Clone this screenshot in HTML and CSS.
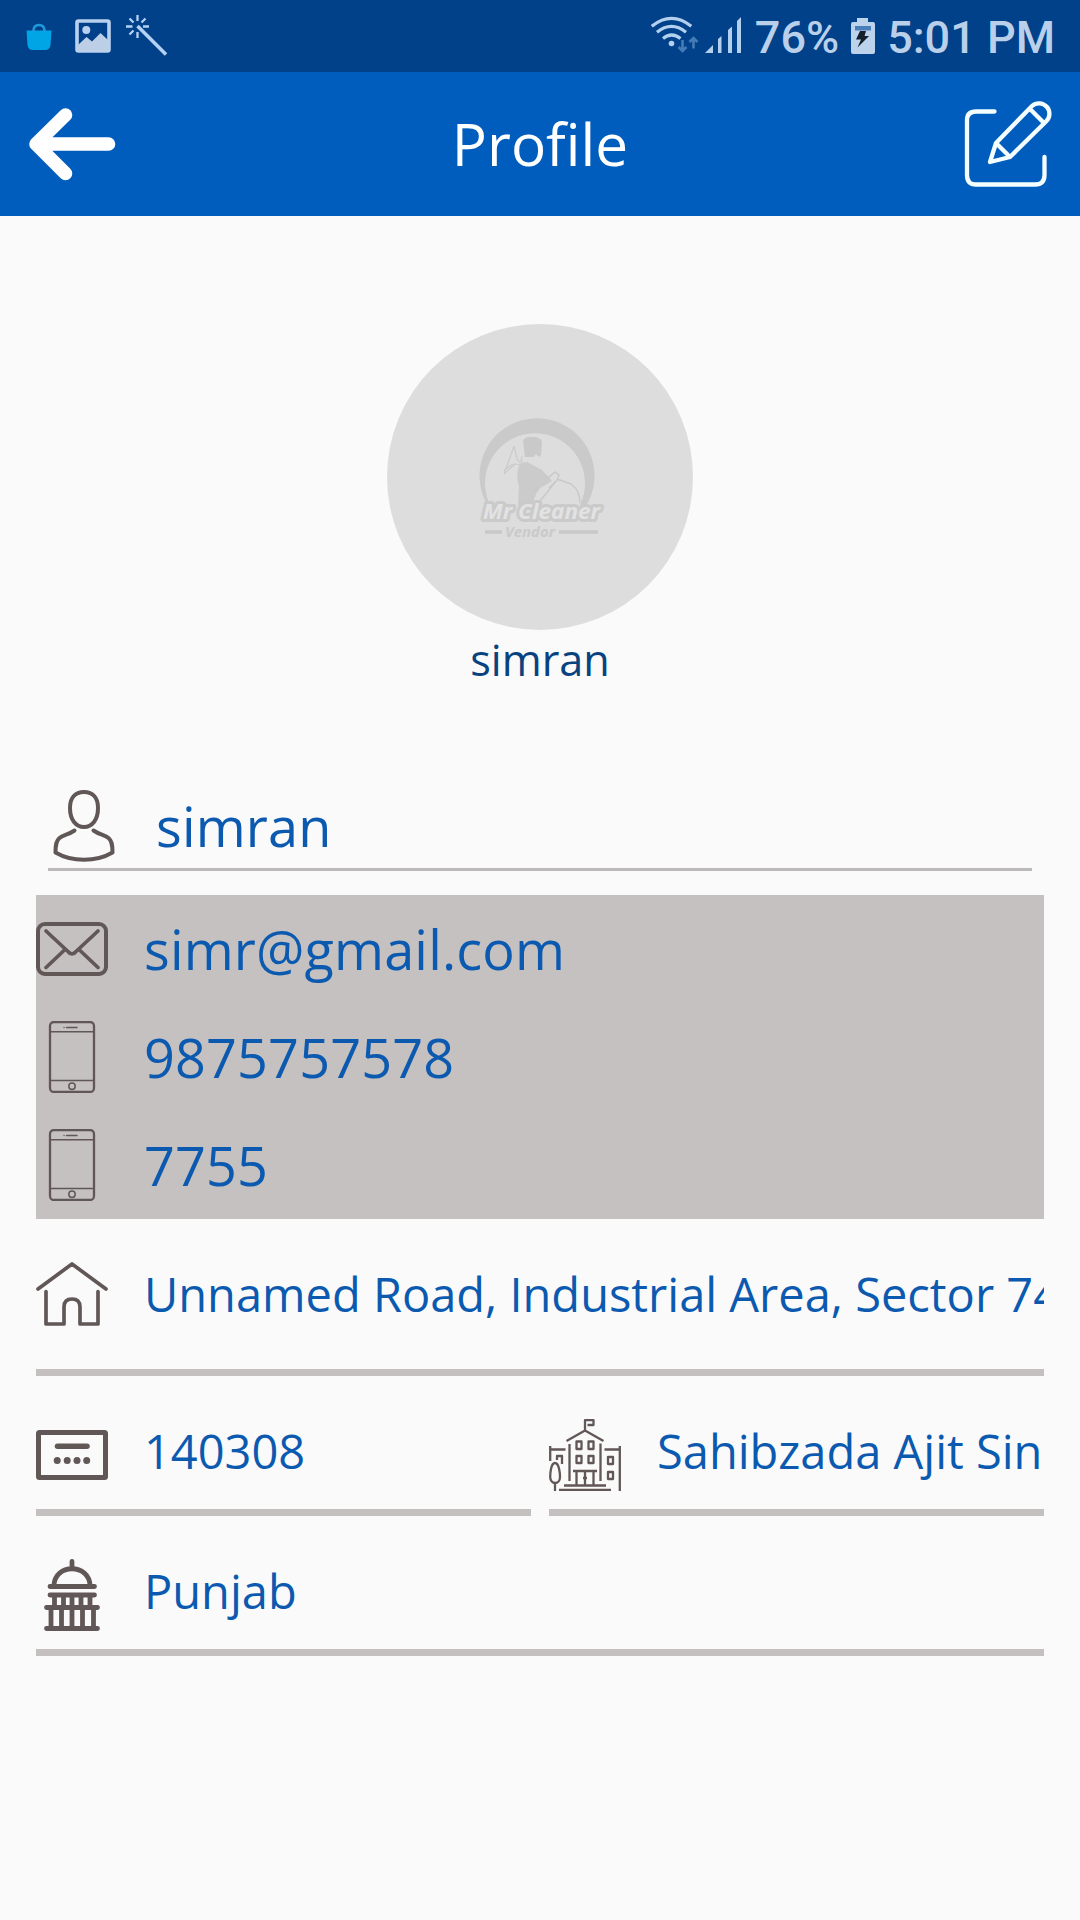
FILE: index.html
```html
<!DOCTYPE html>
<html lang="en">
<head>
<meta charset="utf-8">
<title>Profile</title>
<link rel="stylesheet" href="styles.css">
</head>
<body>
<div class="status-bar">
  <div class="notifications">
    <svg width="26" height="72" viewBox="26 0 26 72">
      <path d="M26.500 30.500H51.500L50.500 45Q50 50 45 50H33Q28 50 27.500 45Z" fill="#00a5e6"/>
      <path d="M33.500 32V30Q34 25 39 25Q44 25 44.500 30V32" fill="none" stroke="#1d9bdc" stroke-width="2.500"/>
    </svg>
    <svg width="36" height="72" viewBox="75 0 36 72">
      <rect x="77" y="21" width="32" height="30" rx="1.500" fill="none" stroke="#b9d0ee" stroke-width="3.600"/>
      <circle cx="86.300" cy="30" r="4" fill="#b9d0ee"/>
      <path d="M78 45L86.500 37L92 41.500L100.500 33L108 40V51H78Z" fill="#bccfe6"/>
    </svg>
    <svg width="42" height="72" viewBox="126 0 42 72">
      <g fill="none" stroke="#b4d2f4" stroke-width="2.300">
        <path d="M137.500 15V21M137.500 32V38M126 26.500H132.500M143 26.500H149M129.500 18.500L133.500 22.500M145.500 18.500L141.500 22.500M129.500 34.500L133.500 30.500"/>
        <path d="M137.500 26L166 54.500" stroke-width="3.600"/>
      </g>
    </svg>
  </div>
  <div class="system">
    <svg class="wifi" width="49" height="72" viewBox="650 0 49 72">
      <g fill="none" stroke="#b4d0ef" stroke-width="3.200">
        <path d="M650.800 26.200Q670.500 10.500 690.300 26.200M656 32.300Q670.500 20.500 685 32.300M662 38.500Q670.500 31.500 679.500 38.500"/>
      </g>
      <circle cx="670.500" cy="43.500" r="2.800" fill="#b4d0ef"/>
      <path d="M681.500 40V51M677.500 47L681.500 51L685.500 47M692.500 48.500V38M688.500 42L692.500 38L696.500 42" fill="none" stroke="#457cb7" stroke-width="2.600"/>
    </svg>
    <svg class="signal" width="37" height="72" viewBox="704 0 37 72">
      <path d="M704 53L712 45V53ZM717 53V39L720.500 36V53ZM727 53V30L731 26.500V53ZM736 53V21L740 17V53Z" fill="#b4d0ef"/>
    </svg>
    <span class="battery-level">76%</span>
    <svg class="battery" width="24" height="72" viewBox="851 0 24 72">
      <path d="M857 22V18H868V22H873Q875 22 875 24V52Q875 54 873 54H853Q851 54 851 52V24Q851 22 853 22Z" fill="#bdd3ec"/>
      <path d="M855 26H871V30.500H855Z" fill="#4a7eb9"/>
      <path d="M860 31H866L864.500 36H869L857.500 47.500L861 39.500H856Z" fill="#14202c"/>
    </svg>
    <span class="clock">5:01 PM</span>
  </div>
</div>

<header class="app-bar">
  <svg class="back" width="88" height="88" viewBox="28 100 88 88">
    <path d="M65.500 115L36 144L65.500 173.500M36 144H108.500" fill="none" stroke="#fff" stroke-width="13.600" stroke-linecap="round" stroke-linejoin="round"/>
  </svg>
  <h1>Profile</h1>
  <svg class="edit" width="88" height="88" viewBox="964 100 88 88">
    <g fill="none" stroke="#f4feff" stroke-width="4.300" stroke-linecap="round" stroke-linejoin="round">
      <path d="M994.500 111.500H976Q967 111.500 967 120.500V175Q967 184.500 976 184.500H1035Q1044.500 184.500 1044.500 175V157"/>
      <path d="M990 162L996 143L1032 106A10.300 10.300 0 0 1 1046 121.500L1010 157ZM996 143L1010 157M1030 109L1043 122"/>
    </g>
  </svg>
</header>

<main>
  <section class="identity">
    <svg class="avatar" width="306" height="306" viewBox="387 324 306 306">
      <circle cx="540" cy="477" r="153" fill="#ddd"/>
      <path d="M487.500 505A57.500 57.500 0 1 1 586.500 505H580A50 50 0 1 0 490 505Z" fill="#cacaca"/>
      <path d="M523 441Q525 436 533 437Q541 437 542 442L541 455L539 457L536 454L533 457H525Z" fill="#c9c9c9"/>
      <path d="M520 464L527 462L542 470L552 481L540 488L536 494L532 505H518L519 487Q515 472 520 464Z" fill="#cbcbcb"/>
      <path d="M514 446L508 463L504 474L515 464L521 465M514 446L517 459L521 464M504 470L513 464M522 456L521 461L525 464" fill="none" stroke="#cbcbcb" stroke-width="1.200"/>
      <path d="M540 501L557 480M557 479L571 484Q580 490 580 503M543 474L548 478L555 472L559 475L557 480L549 488M538 486L534 492" fill="none" stroke="#c9c9c9" stroke-width="1.400"/>
      <text class="logo-name" x="483" y="519" textLength="117" lengthAdjust="spacingAndGlyphs">Mr Cleaner</text>
      <text class="logo-role" x="505" y="537" textLength="50" lengthAdjust="spacingAndGlyphs">Vendor</text>
      <path d="M485 532H502M559 532H598" stroke="#c8c8c8" stroke-width="3.500"/>
    </svg>
    <p class="display-name">simran</p>
  </section>

  <div class="field name-field">
    <svg class="icon" viewBox="0 0 72 72">
      <g stroke-width="4">
        <path d="M36 2C45 2 50 8 50 18C50 30 44 37 36 37S22 30 22 18C22 8 27 2 36 2Z"/>
        <path d="M26.500 40.500C20 45 15 45 11.500 48C8 51 7.500 55 7.500 62.500C24 72.200 48 72.200 64.500 62.500C64.500 55 64 51 60.500 48C57 45 52 45 45.500 40.500"/>
      </g>
    </svg>
    <span>simran</span>
  </div>

  <section class="contact">
    <div class="field">
      <svg class="icon" viewBox="0 0 72 72">
        <g stroke-width="4">
          <rect x="2" y="11" width="68" height="50" rx="7"/>
          <path d="M10 18L32 38.500Q36 43.500 40 38.500L62 18M10 54.500L28.500 37M62 54.500L43.500 37" stroke-width="3.700"/>
        </g>
      </svg>
      <span>simr@gmail.com</span>
    </div>
    <div class="field">
      <svg class="icon" viewBox="0 0 72 72">
        <rect x="14" y="1" width="44" height="70" rx="4" stroke-width="2.300"/>
        <path d="M14 10.700H58M14 59.500H58M30.500 6.500H41" stroke-width="1.500"/>
        <path d="M28 6.500H28.100" stroke-width="1.300"/>
        <circle cx="36" cy="65.300" r="3.200" stroke-width="1.500"/>
      </svg>
      <span>9875757578</span>
    </div>
    <div class="field">
      <svg class="icon" viewBox="0 0 72 72">
        <rect x="14" y="1" width="44" height="70" rx="4" stroke-width="2.300"/>
        <path d="M14 10.700H58M14 59.500H58M30.500 6.500H41" stroke-width="1.500"/>
        <path d="M28 6.500H28.100" stroke-width="1.300"/>
        <circle cx="36" cy="65.300" r="3.200" stroke-width="1.500"/>
      </svg>
      <span>7755</span>
    </div>
  </section>

  <div class="field line-field street">
    <svg class="icon" viewBox="0 0 72 72">
      <path d="M2 31L36 6L70 31M10 33.500V66H28V49Q28 41 36 41T44 49V66H62V33.500" stroke-width="3.700"/>
    </svg>
    <span>Unnamed Road, Industrial Area, Sector 74</span>
  </div>

  <div class="pair">
    <div class="field line-field">
      <svg class="icon" viewBox="0 0 72 72">
        <rect x="2.500" y="13.500" width="67" height="45" rx="1" stroke-width="5"/>
        <path d="M21.500 27.300H51" stroke-width="5.500"/>
        <path d="M21.200 41.500H21.210M31.200 41.500H31.210M41 41.500H41.010M50.700 41.500H50.710" stroke-width="7"/>
      </svg>
      <span>140308</span>
    </div>
    <div class="field line-field">
      <svg class="icon" viewBox="0 0 72 72">
        <g stroke-width="2.300" stroke-linecap="butt">
          <path d="M36 12V1.200H44.500V6H38.500M17.500 22L36 11.500L54.500 22M20.500 25V62M51.500 24.500V62"/>
          <path d="M1.200 42V27M1 30.500H16.500M8 41V37H13V45M70.800 72V27M71 30.500H55.500"/>
          <path d="M27.500 22.500H32.500V30H27.500ZM39.500 22.500H44.500V30H39.500ZM27.500 37H32.500V44H27.500ZM39.500 37H44.500V44H39.500ZM59 38H64V45H59ZM59 53H64V60H59Z"/>
          <path d="M24 52H48M27.500 52V66M44.500 52V66M36 52V66M34 59H38M15 66.500H57M10 71H62"/>
          <path d="M6 44C10 44 11 54 11 58C11 66 1.200 66 1.200 58C1.200 54 2 44 6 44ZM6 64V72"/>
        </g>
      </svg>
      <span>Sahibzada Ajit Sin</span>
    </div>
  </div>

  <div class="field line-field region">
    <svg class="icon" viewBox="0 0 72 72">
      <g stroke-width="4.800">
        <path d="M36 2.500V9M18 27C18 4 54 4 54 27M14 27.500H58.500M14 36H58.500M10.500 48.500H61.500M10.500 69.500H61.500"/>
        <path d="M18.500 36V47M27.500 36V47M36 36V47M45 36V47M54 36V47M15 49V69M25.500 49V69M36 49V69M46.500 49V69M57.500 49V69" stroke-linecap="butt"/>
      </g>
    </svg>
    <span>Punjab</span>
  </div>
</main>
</body>
</html>
```
FILE: styles.css
```css
* {
  box-sizing: border-box;
}

body {
  margin: 0;
  min-height: 1920px;
  background: #fafafa;
  color: #0c5ab0;
  font-family: "Open Sans", "Noto Sans", sans-serif;
}

svg {
  display: block;
  flex: none;
}

.status-bar {
  height: 72px;
  padding: 0 25px 0 26px;
  display: flex;
  justify-content: space-between;
  background: #004189;
  color: #b9cfea;
  font: 500 45px/75px Roboto, sans-serif;
}

.notifications,
.system {
  display: flex;
}

.notifications {
  gap: 15px;
}

.notifications svg:first-child {
  margin-right: 8px;
}

.signal {
  margin: 0 13px 0 5px;
}

.battery {
  margin: 0 12px;
}

.app-bar {
  height: 144px;
  padding: 0 28px;
  display: flex;
  align-items: center;
  justify-content: space-between;
  background: #005dbd;
}

h1 {
  margin: 0 0 2px;
  color: #fff;
  font-size: 58.5px;
  font-weight: 400;
}

main {
  padding: 108px 36px 0;
}

.identity {
  display: flex;
  flex-direction: column;
  align-items: center;
}

.display-name {
  margin: 0;
  color: #08427f;
  font-size: 43.2px;
  line-height: 60px;
}

.logo-name,
.logo-role {
  font-family: "Open Sans", sans-serif;
  font-style: italic;
  font-weight: 700;
}

.logo-name {
  font-size: 22px;
  fill: #e2e2e2;
  stroke: #cacaca;
  stroke-width: 6px;
  stroke-linejoin: round;
  paint-order: stroke;
}

.logo-role {
  font-size: 14px;
  fill: #cacaca;
}

.field {
  display: flex;
  align-items: center;
  gap: 36px;
  height: 108px;
  font-size: 54px;
  letter-spacing: 0.15px;
  white-space: nowrap;
  overflow: hidden;
}

.icon {
  width: 72px;
  height: 72px;
  fill: none;
  stroke: #625757;
  stroke-linecap: round;
  stroke-linejoin: round;
}

.name-field {
  height: 90px;
  padding-top: 2px;
  margin: 91px 12px 24px;
  border-bottom: 3px solid #bbb9b9;
}

.contact {
  background: #c5c1c0;
}

.line-field {
  font-size: 47px;
  letter-spacing: 0;
  border-bottom: 7px solid #c5c0c0;
}

.street {
  height: 158px;
  margin-bottom: -1px;
}

.street {
  height: 157px;
  margin-bottom: 0;
}

.pair {
  display: grid;
  grid-template-columns: 1fr 1fr;
  gap: 18px;
}

.pair .field,
.region {
  height: 140px;
  padding-top: 24px;
}

.pair span,
.region span {
  margin-top: -7px;
}
```
